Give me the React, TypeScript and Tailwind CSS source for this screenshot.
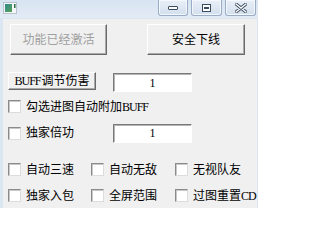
import React from 'react';

const font = "font-['Liberation_Serif','Noto_Sans_CJK_SC',serif]";

// Latin glyphs in the reference are narrow, like SimSun's half-width set
const Latin: React.FC<{ children: React.ReactNode }> = ({ children }) => (
    <span className="tracking-[-1px] mr-[1px]">{children}</span>
);

const Check: React.FC<{ label: React.ReactNode; className?: string }> = ({ label, className = '' }) => (
    <div className={`flex items-center h-[13px] ${className}`}>
        <span className="w-[13px] h-[13px] shrink-0 bg-white border border-t-[#8a8a8a] border-l-[#8a8a8a] border-b-[#dcdcdc] border-r-[#dcdcdc] shadow-[inset_1px_1px_0_#c8c8c8]" />
        <span className="ml-[5px] text-[12px] leading-none text-black whitespace-nowrap">{label}</span>
    </div>
);

const Edit: React.FC<{ value: string }> = ({ value }) => (
    <div className="w-[79px] h-[19px] bg-white border border-t-[#7a7a7a] border-l-[#7a7a7a] border-b-white border-r-white shadow-[inset_1px_1px_0_#b4b4b4] flex items-center justify-center text-[12px] leading-none text-black">
        {value}
    </div>
);

const CaptionButton: React.FC<{ children: React.ReactNode; className?: string }> = ({ children, className = '' }) => (
    <div className={`h-[16px] rounded-b-[3px] border border-t-0 border-[#9aadc6] bg-gradient-to-b from-[#e9eff7] to-[#d3dfee] shadow-[inset_0_0_0_1px_#f4f7fb] flex items-center justify-center ${className}`}>
        {children}
    </div>
);

const btn3d = "bg-[#f0f0f0] border border-t-white border-l-white border-r-[#6a6a6a] border-b-[#6a6a6a] shadow-[inset_-1px_-1px_0_#a9a9a9] text-[12px] leading-none";

export default function App() {
    return (
        <div className={`w-[258px] h-[208px] overflow-hidden bg-[#dbe6f3] flex flex-col ${font}`}>
            {/* Title bar */}
            <div className="h-[18px] shrink-0 flex items-start bg-gradient-to-b from-[#d8e4f2] to-[#e3ebf5]">
                <svg className="ml-[3px] mt-[2px]" width="14" height="12" viewBox="0 0 14 12">
                    <rect x="0.5" y="0.5" width="13" height="11" fill="#f4f6f8" stroke="#b9c3cc" />
                    <defs>
                        <linearGradient id="ic" x1="0" y1="0" x2="1" y2="1">
                            <stop offset="0" stopColor="#2f8a8a" />
                            <stop offset="1" stopColor="#5aa15a" />
                        </linearGradient>
                    </defs>
                    <rect x="2" y="2" width="7" height="8" fill="url(#ic)" />
                    <rect x="11" y="2" width="1.5" height="4" fill="#2d6b3a" />
                </svg>
                <div className="ml-auto flex gap-[3px] mr-[2px]">
                    <CaptionButton className="w-[30px]">
                        <span className="w-[10px] h-[4px] rounded-[1px] border border-[#3b4b60] bg-white" />
                    </CaptionButton>
                    <CaptionButton className="w-[31px]">
                        <span className="w-[9px] h-[8px] border border-[#3b4b60] bg-white flex items-center justify-center">
                            <span className="w-[5px] h-[2px] bg-[#3b4b60]" />
                        </span>
                    </CaptionButton>
                    <CaptionButton className="w-[31px]">
                        <svg width="12" height="10" viewBox="0 0 12 10">
                            <path d="M1 1 L11 9 M11 1 L1 9" stroke="#3b4b60" strokeWidth="3.2" strokeLinecap="round" />
                            <path d="M1 1 L11 9 M11 1 L1 9" stroke="#ffffff" strokeWidth="1.4" strokeLinecap="round" />
                        </svg>
                    </CaptionButton>
                </div>
            </div>

            {/* Client area */}
            <div className="flex-1 ml-[3px] mr-[1px] mt-[1px] bg-[#f0f0f0] flex flex-col">
                <div className="flex mt-[5px] pl-[7px] gap-[40px]">
                    <button className={`w-[97px] h-[31px] text-[#a0a0a0] ${btn3d}`}>功能已经激活</button>
                    <button className={`w-[98px] h-[31px] text-black ${btn3d}`}>安全下线</button>
                </div>

                <div className="flex items-start mt-[17px] pl-[5px] gap-[17px]">
                    <button className={`w-[88px] h-[18px] text-black ${btn3d}`}>
                        <Latin>BUFF</Latin>调节伤害
                    </button>
                    <div className="mt-[1px]">
                        <Edit value="1" />
                    </div>
                </div>

                <Check label={<>勾选进图自动附加<Latin>BUFF</Latin></>} className="mt-[8px] ml-[5px]" />

                <div className="flex items-center mt-[11px] ml-[5px] h-[18px]">
                    <Check label="独家倍功" className="w-[105px]" />
                    <Edit value="1" />
                </div>

                <div className="grid grid-cols-[83px_84px_1fr] gap-y-[13px] mt-[21px] ml-[5px]">
                    <Check label="自动三速" />
                    <Check label="自动无敌" />
                    <Check label="无视队友" />
                    <Check label="独家入包" />
                    <Check label="全屏范围" />
                    <Check label={<>过图重置<Latin>CD</Latin></>} />
                </div>
            </div>
        </div>
    );
}
